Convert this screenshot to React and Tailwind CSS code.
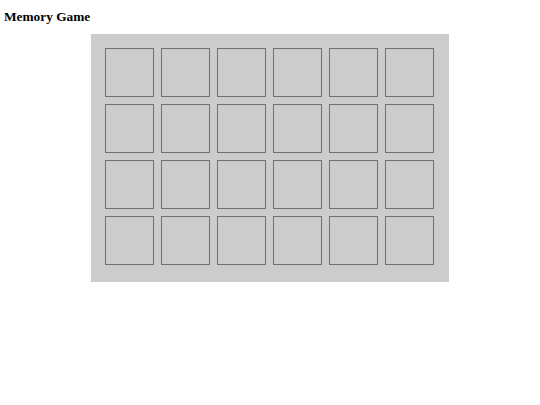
import React from "react";

const tiles = Array.from({ length: 24 }, (_, i) => i);

export default function App() {
  return (
    <div className="min-h-[405px] bg-white" style={{ fontFamily: '"Liberation Serif", serif' }}>
      <h1 className="pl-1 pt-[9px] text-[13.33px] leading-[15px] font-bold text-black">
        Memory Game
      </h1>
      <div className="mt-[10px] flex justify-center">
        <div className="grid w-[358px] grid-cols-[repeat(6,49px)] gap-[7px] bg-[#cccccc] pt-[14px] pr-[15px] pb-[17px] pl-[14px]">
          {tiles.map((t) => (
            <div
              key={t}
              className="h-[49px] w-[49px] border border-[#6f6f6f] bg-[#cccccc]"
            />
          ))}
        </div>
      </div>
    </div>
  );
}
